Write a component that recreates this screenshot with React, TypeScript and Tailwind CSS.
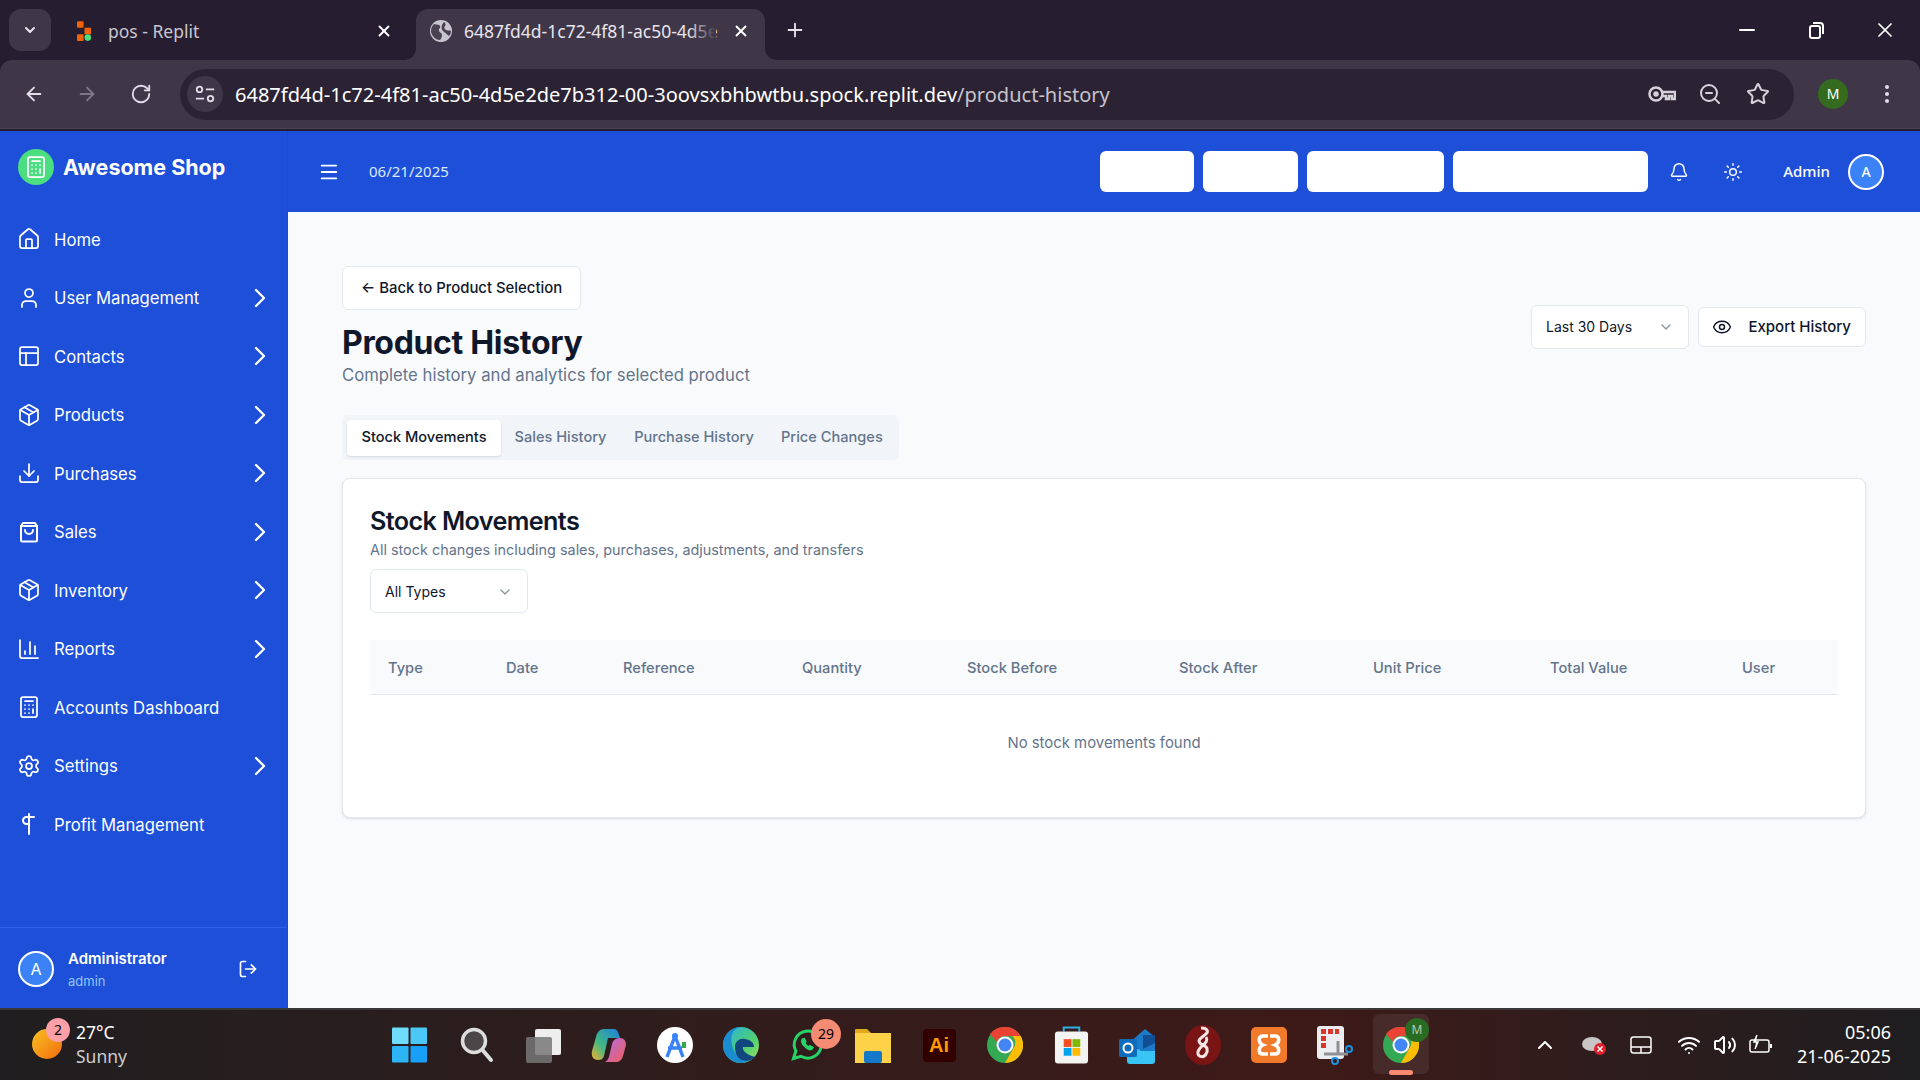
import {
  Home, User, PanelsTopLeft, Package, Download, ChevronRight, ChartColumn, Calculator, Settings,
  LogOut, Menu, Bell, Sun, Eye, ChevronDown, ArrowLeft, ArrowRight, RotateCw, X, Plus, Minus, Star,
  ZoomOut, EllipsisVertical, ChevronUp, Wifi, Volume2,
} from "lucide-react";
import type { ReactNode } from "react";

function SalesIcon({ className }: { className?: string }) {
  return (
    <svg viewBox="0 0 24 24" className={className} fill="none" stroke="currentColor" strokeWidth="2" strokeLinecap="round" strokeLinejoin="round">
      <path d="M6 3 4 6v14a1.500 1.500 0 0 0 1.500 1.500h13A1.500 1.500 0 0 0 20 20V6l-2-3Z" />
      <path d="M4 6h16" />
      <path d="M16 10a4 4 0 0 1-8 0" />
    </svg>
  );
}

function ProfitIcon({ className }: { className?: string }) {
  return (
    <svg viewBox="0 0 24 24" className={className} fill="none" stroke="currentColor" strokeWidth="2" strokeLinecap="round" strokeLinejoin="round">
      <path d="M12 2v20" />
      <path d="M17 5H9.500a3.500 3.500 0 0 0 0 7H12" />
    </svg>
  );
}

const nav = [
  { label: "Home", icon: <Home className="w-6 h-6" strokeWidth={1.75} /> },
  { label: "User Management", icon: <User className="w-6 h-6" strokeWidth={1.75} />, sub: true },
  { label: "Contacts", icon: <PanelsTopLeft className="w-6 h-6" strokeWidth={1.75} />, sub: true },
  { label: "Products", icon: <Package className="w-6 h-6" strokeWidth={1.75} />, sub: true },
  { label: "Purchases", icon: <Download className="w-6 h-6" strokeWidth={1.75} />, sub: true },
  { label: "Sales", icon: <SalesIcon className="w-6 h-6" />, sub: true },
  { label: "Inventory", icon: <Package className="w-6 h-6" strokeWidth={1.75} />, sub: true },
  { label: "Reports", icon: <ChartColumn className="w-6 h-6" strokeWidth={1.75} />, sub: true },
  { label: "Accounts Dashboard", icon: <Calculator className="w-6 h-6" strokeWidth={1.75} /> },
  { label: "Settings", icon: <Settings className="w-6 h-6" strokeWidth={1.75} />, sub: true },
  { label: "Profit Management", icon: <ProfitIcon className="w-6 h-6" /> },
];

const columns = [
  { name: "Type", w: "w-[118px]" },
  { name: "Date", w: "w-[117px]" },
  { name: "Reference", w: "w-[179px]" },
  { name: "Quantity", w: "w-[165px]" },
  { name: "Stock Before", w: "w-[212px]" },
  { name: "Stock After", w: "w-[194px]" },
  { name: "Unit Price", w: "w-[177px]" },
  { name: "Total Value", w: "w-[192px]" },
  { name: "User", w: "w-[114px]" },
];

function BrowserChrome() {
  return (
    <div className="h-[131px] shrink-0 bg-[#261e30] text-[#e8e4ec] font-['Noto_Sans',sans-serif]">
      <div className="h-[60px] flex items-end pl-[9px] relative">
        <div className="w-[42px] h-[42px] mb-[9px] rounded-xl bg-[#3f3748] flex items-center justify-center">
          <ChevronDown className="w-4 h-4" strokeWidth={3} />
        </div>
        <div className="w-[365px] h-[51px] flex items-center pl-[26px] pb-[7px] text-[#c9c5ce] text-[17.5px]">
          <svg viewBox="0 0 16 22" className="w-[15px] h-[21px] mr-4">
            <rect x="0" y="0" width="7" height="7" rx="1" fill="#f26207" />
            <rect x="8" y="7" width="7" height="7" fill="#f26207" />
            <rect x="0" y="14" width="7" height="7" rx="1" fill="#f26207" />
            <circle cx="11.500" cy="17.500" r="3.500" fill="#4ade80" />
          </svg>
          <span className="flex-1">pos - Replit</span>
          <X className="w-[18px] h-[18px] mr-[23px] text-white" strokeWidth={2.5} />
        </div>
        <div className="w-[349px] h-[51px] bg-[#3f3748] rounded-t-xl flex items-center pl-[14px] pb-[7px] text-[17.5px] relative">
          <svg viewBox="0 0 12 12" className="absolute -left-3 bottom-0 w-3 h-3">
            <path d="M12 0v12H0C7 12 12 7 12 0Z" fill="#3f3748" />
          </svg>
          <svg viewBox="0 0 12 12" className="absolute -right-3 bottom-0 w-3 h-3">
            <path d="M0 0v12h12C5 12 0 7 0 0Z" fill="#3f3748" />
          </svg>
          <svg viewBox="0 0 22 22" className="w-[22px] h-[22px] mr-3">
            <circle cx="11" cy="11" r="11" fill="#c9c5ce" />
            <path d="M4 4c3 1 5 0 6 2s-2 3-1 5 3 2 3 4-1 4-2 5C5 20 1 15 1 11c0-3 1-5 3-7Z" fill="#4a4253" />
            <path d="M14 2c2 1 2 3 1 4s-1 3 1 4 4 0 5 1c0 2-1 4-2 5-2-2-4-3-6-5s-2-6 1-9Z" fill="#4a4253" />
          </svg>
          <div className="w-[252px] relative whitespace-nowrap">
            6487fd4d-1c72-4f81-ac50-4d5e
            <div className="absolute right-0 top-0 bottom-0 w-7 bg-gradient-to-r from-transparent to-[#3f3748]" />
          </div>
          <X className="w-[18px] h-[18px] ml-4 text-white" strokeWidth={2.5} />
        </div>
        <Plus className="w-[22px] h-[22px] ml-[19px] mb-[19px] text-[#e8e4ec]" />
        <div className="ml-auto flex items-center h-[60px] pr-[23px] gap-[47px] text-white">
          <Minus className="w-6 h-6" strokeWidth={2} />
          <svg viewBox="0 0 20 20" className="w-5 h-5" fill="none" stroke="currentColor" strokeWidth="2">
            <rect x="4" y="6" width="10" height="12" rx="2" />
            <path d="M7 3h7a3 3 0 0 1 3 3v8" />
          </svg>
          <X className="w-6 h-6" strokeWidth={1.75} />
        </div>
      </div>
      <div className="h-[69px] bg-[#3f3748] rounded-t-xl flex items-center pl-[23px] border-b border-[#4b4350]">
        <ArrowLeft className="w-[22px] h-[22px] text-[#e1dde6]" />
        <ArrowRight className="w-[22px] h-[22px] ml-[31px] text-[#7d7785]" />
        <RotateCw className="w-[22px] h-[22px] ml-[32px] text-[#e1dde6]" />
        <div className="ml-[28px] w-[1614px] h-[51px] rounded-full bg-[#2b2334] flex items-center pl-[7px]">
          <div className="w-9 h-9 rounded-full bg-[#3f3748] flex items-center justify-center">
            <svg viewBox="0 0 24 24" className="w-[22px] h-[22px] text-[#e1dde6]" fill="none" stroke="currentColor" strokeWidth="2">
              <circle cx="6" cy="7" r="3" />
              <path d="M13 7h9M2 17h9" />
              <circle cx="18" cy="17" r="3" />
            </svg>
          </div>
          <span className="ml-[12px] pt-[2px] text-[20.05px] text-white whitespace-nowrap">
            6487fd4d-1c72-4f81-ac50-4d5e2de7b312-00-3oovsxbhbwtbu.spock.replit.dev<span className="text-[#c6c2cc]">/product-history</span>
          </span>
          <div className="ml-auto flex items-center gap-[24px] pr-[24px] text-[#d6d2da]">
            <svg viewBox="0 0 28 20" className="w-[28px] h-5 -mr-[2px]" fill="none" stroke="currentColor" strokeWidth="2.500">
              <circle cx="8" cy="10" r="6.500" />
              <circle cx="8" cy="10" r="1.500" fill="currentColor" />
              <path d="M14.500 8H27v7h-3v-3h-3v3h-3v-3h-3" />
            </svg>
            <ZoomOut className="w-6 h-6" />
            <Star className="w-6 h-6" />
          </div>
        </div>
        <div className="ml-[24px] w-[30px] h-[30px] rounded-full bg-[#356b1f] flex items-center justify-center text-sm text-white">M</div>
        <EllipsisVertical className="ml-[27px] w-6 h-6 text-[#e1dde6]" />
      </div>
    </div>
  );
}

function Sidebar() {
  return (
    <aside className="w-72 shrink-0 bg-[#1d4fd8] text-white flex flex-col border-r border-[#1c4ad0] font-['Inter',sans-serif]">
      <div className="flex items-center h-[72px] pl-[18px] pb-[1px]">
        <div className="w-9 h-9 rounded-full bg-[#4ade80] flex items-center justify-center">
          <Calculator className="w-6 h-6 text-white" strokeWidth={1.75} />
        </div>
        <span className="ml-[9px] pt-[2px] text-[21.5px] font-bold">Awesome Shop</span>
      </div>
      <nav className="pt-[7px] flex-1">
        {nav.map((item) => (
          <div key={item.label} className="h-[58.5px] flex items-center pl-[17px] pr-[11px]">
            {item.icon}
            <span className="ml-[13px] mt-[2px] text-[16.7px] flex-1">{item.label}</span>
            {item.sub && <ChevronRight className="w-8 h-8" strokeWidth={1.75} />}
          </div>
        ))}
      </nav>
      <div className="h-[81px] border-t border-[#2f62e6] flex items-center pl-[18px] pr-[29px] pt-[2px]">
        <div className="w-9 h-9 rounded-full bg-[#3b82f6] border-2 border-white flex items-center justify-center text-base">A</div>
        <div className="ml-[14px] mt-[2px] flex-1">
          <div className="text-[15px] font-semibold leading-[22px]">Administrator</div>
          <div className="text-[13px] text-[#93c5fd] leading-[22px]">admin</div>
        </div>
        <LogOut className="w-5 h-5" />
      </div>
    </aside>
  );
}

function Header() {
  return (
    <header className="h-[81px] shrink-0 bg-[#1d4fd8] text-white flex items-center pl-[30px] pr-[36px]">
      <Menu className="w-[22px] h-[22px]" />
      <span className="ml-[29px] text-[15px] text-[#dbeafe]">06/21/2025</span>
      <div className="ml-auto flex items-center gap-[9px]">
        <div className="w-[94px] h-[41px] bg-white rounded-md" />
        <div className="w-[95px] h-[41px] bg-white rounded-md" />
        <div className="w-[137px] h-[41px] bg-white rounded-md" />
        <div className="w-[195px] h-[41px] bg-white rounded-md" />
      </div>
      <Bell className="ml-[21px] w-5 h-5" strokeWidth={1.75} />
      <Sun className="ml-[34px] w-5 h-5" strokeWidth={1.75} />
      <span className="ml-[40px] text-[15px] font-medium">Admin</span>
      <div className="ml-[18px] w-9 h-9 rounded-full bg-[#3b82f6] border-2 border-white flex items-center justify-center text-sm font-medium">A</div>
    </header>
  );
}

function Content() {
  return (
    <main className="flex-1 bg-[#f8fafc] p-[54px] font-['Inter',sans-serif]">
      <div className="flex items-center justify-between">
        <div>
          <button className="h-[44px] px-[18px] pt-[1px] bg-white border border-[#e2e8f0] rounded-md text-[14.9px] font-medium text-[#0f172a]">← Back to Product Selection</button>
          <h1 className="mt-[15px] text-[32px] leading-[36px] font-bold tracking-[-0.01em] text-[#0f172a]">Product History</h1>
          <p className="text-[16.7px] leading-[29px] text-[#64748b]">Complete history and analytics for selected product</p>
        </div>
        <div className="flex items-center gap-[9px] mb-[2px]">
          <div className="w-[158px] h-[44px] px-[14px] bg-white border border-[#e2e8f0] rounded-md flex items-center justify-between text-sm text-[#0f172a]">
            Last 30 Days
            <ChevronDown className="w-4 h-4 text-[#8b93a1]" />
          </div>
          <button className="w-[168px] h-[40px] pl-[13px] pr-[14px] bg-white border border-[#e2e8f0] rounded-md flex items-center justify-between text-[15px] font-medium text-[#0f172a]">
            <Eye className="w-5 h-5" strokeWidth={1.75} />
            Export History
          </button>
        </div>
      </div>
      <div className="mt-[25px] w-[557px] h-[45px] bg-[#f1f5f9] rounded-md flex items-center pl-[5px] text-[14.6px] font-medium text-[#64748b]">
        <div className="w-[154px] h-[36px] pt-[1px] bg-white rounded shadow-sm flex items-center justify-center text-[#0f172a]">Stock Movements</div>
        <div className="ml-[13px] pt-[1px] w-[93px] text-center whitespace-nowrap">Sales History</div>
        <div className="ml-[27px] pt-[1px] w-[120px] text-center whitespace-nowrap">Purchase History</div>
        <div className="ml-[27px] pt-[1px] w-[100px] text-center whitespace-nowrap">Price Changes</div>
      </div>
      <section className="mt-[18px] h-[340px] bg-white border border-[#e2e8f0] rounded-lg shadow-sm pt-[27px] px-[27px]">
        <h2 className="text-[25.2px] leading-[30px] font-semibold tracking-tight text-[#0f172a]">Stock Movements</h2>
        <p className="text-[14.4px] leading-[27px] text-[#64748b]">All stock changes including sales, purchases, adjustments, and transfers</p>
        <div className="mt-[6px] w-[158px] h-[44px] pl-[14px] pr-[14px] pt-[1px] bg-white border border-[#e2e8f0] rounded-md flex items-center justify-between text-sm text-[#0f172a]">
          All Types
          <ChevronDown className="w-4 h-4 text-[#8b93a1]" />
        </div>
        <table className="mt-[27px] w-full table-fixed text-[14.7px]">
          <thead>
            <tr className="h-[54px] bg-[#f8fafc] border-b border-[#e2e8f0]">
              {columns.map((c) => (
                <th key={c.name} className={`${c.w} pl-[18px] pt-[2px] text-left font-medium text-[#64748b]`}>{c.name}</th>
              ))}
            </tr>
          </thead>
          <tbody>
            <tr className="h-[96px]">
              <td colSpan={9} className="pt-[2px] text-center text-[14.9px] text-[#64748b]">No stock movements found</td>
            </tr>
          </tbody>
        </table>
      </section>
    </main>
  );
}

function TaskIcon({ children, className }: { children: ReactNode; className?: string }) {
  return <div className={`w-[66px] h-[70px] flex items-center justify-center relative ${className ?? ""}`}>{children}</div>;
}

function ChromeLogo() {
  return (
    <svg viewBox="0 0 36 36" className="w-9 h-9">
      <circle cx="18" cy="18" r="18" fill="#34a853" />
      <path d="M18 0a18 18 0 0 1 15.600 9H18a9 9 0 0 0-8.400 5.600L3 7A18 18 0 0 1 18 0Z" fill="#ea4335" />
      <path d="M33.600 9A18 18 0 0 1 18 36l7.600-13.500A9 9 0 0 0 25 9Z" fill="#fbbc04" />
      <circle cx="18" cy="18" r="8.500" fill="#fff" />
      <circle cx="18" cy="18" r="6.500" fill="#4285f4" />
    </svg>
  );
}

function Taskbar() {
  return (
    <div className="h-[72px] shrink-0 flex items-center border-t-2 border-[#3a3838] bg-gradient-to-r from-[#201e20] via-[#3d1a18] via-[68%] to-[#1e1d20] text-white font-['Noto_Sans',sans-serif]">
      <div className="w-[378px] h-full flex items-center pl-[32px] pb-[2px] relative">
        <div className="w-[30px] h-[30px] rounded-full bg-gradient-to-br from-[#f5c022] to-[#f26a0d]" />
        <div className="absolute left-[46px] top-[8px] w-6 h-6 rounded-full bg-[#ffa0a8] flex items-center justify-center text-sm text-black">2</div>
        <div className="ml-[14px] leading-6">
          <div className="text-[17.5px]">27°C</div>
          <div className="text-[17.5px] text-[#cccccc]">Sunny</div>
        </div>
      </div>
      <TaskIcon className="pr-[4px]">
        <svg viewBox="0 0 36 36" className="w-[35px] h-9">
          <rect x="0" y="0" width="17" height="17" rx="1" fill="#6fdcfb" />
          <rect x="19" y="0" width="17" height="17" rx="1" fill="#4cc8f8" />
          <rect x="0" y="19" width="17" height="17" rx="1" fill="#2cb4f5" />
          <rect x="19" y="19" width="17" height="17" rx="1" fill="#18a0f8" />
        </svg>
      </TaskIcon>
      <TaskIcon>
        <svg viewBox="0 0 36 36" className="w-9 h-9" fill="none">
          <circle cx="15" cy="14" r="11.500" fill="#4d4648" stroke="#dddddd" strokeWidth="3.500" />
          <path d="M23.500 23 32 33" stroke="#dddddd" strokeWidth="4" strokeLinecap="round" />
        </svg>
      </TaskIcon>
      <TaskIcon>
        <svg viewBox="0 0 36 36" className="w-9 h-9">
          <rect x="10" y="2" width="26" height="26" rx="2" fill="#eeeeee" />
          <rect x="1" y="10" width="26" height="26" rx="2" fill="#777777" fillOpacity="0.85" />
        </svg>
      </TaskIcon>
      <TaskIcon>
        <svg viewBox="0 0 36 36" className="w-9 h-9">
          <defs>
            <linearGradient id="cp1" x1="0" y1="1" x2="1" y2="0">
              <stop offset="0" stopColor="#f5b02e" />
              <stop offset="0.4" stopColor="#42b883" />
              <stop offset="1" stopColor="#1d7ee0" />
            </linearGradient>
            <linearGradient id="cp2" x1="0" y1="0" x2="1" y2="1">
              <stop offset="0" stopColor="#b46ae8" />
              <stop offset="1" stopColor="#f0605a" />
            </linearGradient>
          </defs>
          <path d="M13 2h10c2 0 3 1 4 3l2 6H17l-4 18c-1 3-3 4-6 4-5 0-7-4-6-9l4-14C6 5 9 2 13 2Z" fill="url(#cp1)" />
          <path d="M29 11c4 0 6 3 6 7l-3 11c-1 4-4 6-7 6H14c2-1 3-3 4-5l3-13c1-4 4-6 8-6Z" fill="url(#cp2)" />
        </svg>
      </TaskIcon>
      <TaskIcon>
        <svg viewBox="0 0 36 36" className="w-9 h-9">
          <circle cx="18" cy="18" r="18" fill="#ffffff" />
          <circle cx="18" cy="9" r="3" fill="#3b82f6" />
          <path d="M18 9 10 30M18 9l8 21M11 21h14" stroke="#3b82f6" strokeWidth="3.500" fill="none" />
          <rect x="25" y="15" width="4" height="6" fill="#34a853" />
        </svg>
      </TaskIcon>
      <TaskIcon>
        <svg viewBox="0 0 36 36" className="w-9 h-9">
          <defs>
            <linearGradient id="edge" x1="0" y1="0" x2="1" y2="1">
              <stop offset="0" stopColor="#27b0e8" />
              <stop offset="0.6" stopColor="#50d070" />
              <stop offset="1" stopColor="#a4e060" />
            </linearGradient>
          </defs>
          <circle cx="18" cy="18" r="18" fill="url(#edge)" />
          <path d="M0 18C0 8 8 0 18 0c-9 2-11 9-9 18 2 10 10 16 20 14-3 2-7 4-11 4C8 36 0 28 0 18Z" fill="#1a8ccf" />
          <path d="M12 20c0-6 5-9 10-8 6 1 9 4 9 8H20c-1 3 3 7 9 9 2 1 3 1 4 0-4 5-11 6-16 3-3-2-5-7-5-12Z" fill="#12467e" />
        </svg>
      </TaskIcon>
      <TaskIcon>
        <svg viewBox="0 0 24 24" className="w-9 h-9" fill="none" stroke="#25d366" strokeWidth="2">
          <path d="M3 21l1.600-5A9 9 0 1 1 8 19.500Z" />
          <path d="M9 8c-1 1-.6 3 1.500 5s4 2.500 5 1.500l.5-1-2-1-1 .6c-1-.4-2-1.500-2.400-2.400l.6-1-1-2Z" fill="#25d366" strokeWidth="1" />
        </svg>
        <div className="absolute left-[37px] top-[9px] w-[30px] h-[30px] rounded-full bg-[#f58b72] flex items-center justify-center text-sm text-black">29</div>
      </TaskIcon>
      <TaskIcon>
        <svg viewBox="0 0 36 36" className="w-9 h-9">
          <path d="M0 3a1 1 0 0 1 1-1h11l4 4H0Z" fill="#e0a91e" />
          <rect x="0" y="6" width="36" height="30" fill="#fdd148" />
          <rect x="9" y="24" width="18" height="12" rx="2" fill="#1678c9" />
        </svg>
      </TaskIcon>
      <TaskIcon>
        <div className="w-[33px] h-[33px] rounded-sm bg-[#330000] text-[#ff9a00] font-['Liberation_Sans',sans-serif] font-bold text-[20px] flex items-center justify-center">Ai</div>
      </TaskIcon>
      <TaskIcon><ChromeLogo /></TaskIcon>
      <TaskIcon>
        <svg viewBox="0 0 36 40" className="w-[35px] h-[40px]">
          <path d="M10 6V2h16v4" fill="none" stroke="#2cb0e8" strokeWidth="2" />
          <rect x="1" y="6" width="34" height="33" rx="3" fill="#f3f3f3" />
          <rect x="10" y="14" width="8" height="8" fill="#f25022" />
          <rect x="19" y="14" width="8" height="8" fill="#7fba00" />
          <rect x="10" y="23" width="8" height="8" fill="#00a4ef" />
          <rect x="19" y="23" width="8" height="8" fill="#ffb900" />
        </svg>
      </TaskIcon>
      <TaskIcon>
        <svg viewBox="0 0 36 40" className="w-9 h-10">
          <path d="M8 24h28v12a3 3 0 0 1-3 3H11a3 3 0 0 1-3-3Z" fill="#38c5f3" />
          <path d="M10 18 26 4l10 8v14L22 26Z" fill="#1b7bc9" />
          <path d="M24 10h12v8l-12 6Z" fill="#104f94" />
          <rect x="0" y="14" width="18" height="18" rx="2" fill="#0f6cbd" />
          <circle cx="9" cy="23" r="4.500" fill="none" stroke="#fff" strokeWidth="2" />
        </svg>
      </TaskIcon>
      <TaskIcon>
        <svg viewBox="0 0 36 40" className="w-9 h-10">
          <ellipse cx="18" cy="20" rx="18" ry="20" fill="#7b1414" />
          <path d="M16 3c6 0 8 3 5 6l-5 4c-4 3-1 6 2 7 5 2 5 6 3 9-2 4-7 3-8 0-1-4 3-7 5-9 3-2 5-5 3-8" fill="none" stroke="#f5e6e6" strokeWidth="3" />
        </svg>
      </TaskIcon>
      <TaskIcon>
        <svg viewBox="0 0 36 36" className="w-9 h-9">
          <rect x="0" y="0" width="36" height="36" rx="5" fill="#f0792a" />
          <path d="M17 9h-5C7 9 7 16 12 18 7 20 7 27 12 27h5M19 9h5c5 0 5 7 0 9 5 2 5 9 0 9h-5" fill="none" stroke="#fff" strokeWidth="3.500" />
        </svg>
      </TaskIcon>
      <TaskIcon>
        <svg viewBox="0 0 36 40" className="w-9 h-10">
          <rect x="0" y="1" width="27" height="33" rx="3" fill="#ecedf0" />
          <rect x="4" y="4" width="5" height="5" fill="#d9352a" />
          <rect x="11" y="4" width="5" height="5" fill="#d9352a" />
          <rect x="18" y="4" width="4" height="5" fill="#d9352a" />
          <rect x="4" y="11" width="5" height="5" fill="#d9352a" />
          <rect x="4" y="18" width="5" height="5" fill="#d9352a" />
          <path d="M21 16v14M7 29h24" stroke="#8f8f95" strokeWidth="3" />
          <circle cx="32" cy="24" r="3" fill="none" stroke="#1b90e0" strokeWidth="2" />
          <circle cx="18" cy="36" r="3" fill="none" stroke="#1b90e0" strokeWidth="2" />
        </svg>
      </TaskIcon>
      <TaskIcon>
        <div className="absolute left-[5px] top-[4px] w-[56px] h-[60px] rounded-md bg-[#ffffff12]" />
        <div className="relative"><ChromeLogo /></div>
        <div className="absolute left-[37px] top-[8px] w-6 h-6 rounded-full bg-[#2a6b22] flex items-center justify-center text-xs text-[#b8c8b0]">M</div>
        <div className="absolute left-[21px] top-[60px] w-6 h-[5px] rounded-full bg-[#ff8a70]" />
      </TaskIcon>
      <div className="ml-auto flex items-center pr-[29px] h-full">
        <ChevronUp className="w-6 h-6" />
        <svg viewBox="0 0 26 22" className="ml-[24px] w-[26px] h-[22px]">
          <ellipse cx="11" cy="10" rx="10" ry="7" fill="#c9c5c5" />
          <circle cx="19" cy="15" r="6" fill="#e0202c" />
          <path d="M16.500 12.500l5 5m0-5l-5 5" stroke="#fff" strokeWidth="1.500" />
        </svg>
        <svg viewBox="0 0 22 18" className="ml-[23px] w-[22px] h-[18px]" fill="none" stroke="#fff" strokeWidth="1.500">
          <rect x="1" y="1" width="20" height="16" rx="2.500" />
          <path d="M1 11h20M11 11v6" />
        </svg>
        <Wifi className="ml-[25px] w-6 h-6" />
        <Volume2 className="ml-[12px] w-6 h-6" />
        <svg viewBox="0 0 24 20" className="ml-[12px] w-6 h-5" fill="none" stroke="#fff" strokeWidth="1.500">
          <rect x="1" y="5" width="19" height="12" rx="2" />
          <path d="M22 9v4" strokeWidth="2" />
          <path d="M8 0 5 7h4l-3 7" fill="#fff" />
        </svg>
        <div className="ml-[24px] pb-[2px] text-right text-[18px] leading-6">
          <div>05:06</div>
          <div>21-06-2025</div>
        </div>
      </div>
    </div>
  );
}

export default function App() {
  return (
    <div className="w-full h-screen flex flex-col overflow-hidden">
      <BrowserChrome />
      <div className="flex-1 flex min-h-0">
        <Sidebar />
        <div className="flex-1 flex flex-col min-w-0">
          <Header />
          <Content />
        </div>
      </div>
      <Taskbar />
    </div>
  );
}
